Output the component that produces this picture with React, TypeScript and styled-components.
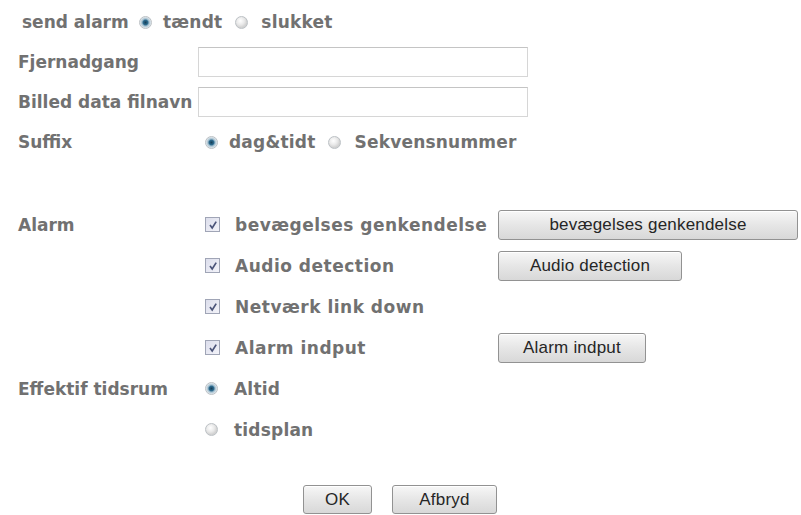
import React from 'react';
import styled, { createGlobalStyle } from 'styled-components';

const GlobalStyle = createGlobalStyle`
  html, body {
    margin: 0;
    padding: 0;
    background: #ffffff;
  }
  body {
    font-family: 'DejaVu Sans', Verdana, sans-serif;
  }
`;

const Form = styled.div`
  width: 801px;
  height: 515px;
  padding: 2px 0 0 18px;
  box-sizing: border-box;
  display: flex;
  flex-direction: column;
  overflow: hidden;
`;

const Row = styled.div<{ $h?: number; $gap?: number }>`
  display: flex;
  align-items: center;
  height: ${(p) => p.$h ?? 41}px;
  margin-top: ${(p) => p.$gap ?? 0}px;
`;

const Label = styled.div<{ $w?: number; $indent?: number }>`
  width: ${(p) => p.$w ?? 180}px;
  padding-left: ${(p) => p.$indent ?? 0}px;
  box-sizing: border-box;
  flex-shrink: 0;
  font-size: 17px;
  letter-spacing: 0;
  font-weight: bold;
  color: #717171;
  white-space: nowrap;
`;

const Options = styled.div<{ $gap?: number }>`
  display: flex;
  align-items: center;
  gap: ${(p) => p.$gap ?? 0}px;
`;

const Option = styled.label<{ $w?: number; $space?: number; $ls?: number }>`
  display: flex;
  align-items: center;
  gap: ${(p) => p.$space ?? 10}px;
  width: ${(p) => (p.$w ? `${p.$w}px` : 'auto')};
  flex-shrink: 0;
  font-size: 17px;
  letter-spacing: ${(p) => p.$ls ?? 0.2}px;
  font-weight: bold;
  color: #717171;
  white-space: nowrap;
`;

const Radio = styled.span<{ $on?: boolean }>`
  width: 13px;
  height: 13px;
  flex-shrink: 0;
  border-radius: 50%;
  box-sizing: border-box;
  border: 1px solid #bcc1c5;
  background: ${(p) =>
    p.$on
      ? 'radial-gradient(circle, #173f58 0, #2c6a8e 2.3px, #a3bfcf 3.6px, #e4eaee 5.5px)'
      : 'radial-gradient(circle at 40% 35%, #ffffff 0, #e9e9e9 4px, #d2d2d2 6.5px)'};
`;

const Check = styled.span`
  width: 15px;
  height: 15px;
  flex-shrink: 0;
  box-sizing: border-box;
  border: 1px solid #a0a5b6;
  background: linear-gradient(135deg, #dcdeec, #f3f3f9);
  display: flex;
  align-items: center;
  justify-content: center;
`;

const TextInput = styled.input`
  width: 330px;
  height: 30px;
  box-sizing: border-box;
  border: 1px solid #d6d6d6;
  border-top-color: #c4c4c4;
  background: #fff;
  margin: 0;
  outline: none;
`;

const Button = styled.button<{ $w: number; $h?: number }>`
  width: ${(p) => p.$w}px;
  height: ${(p) => p.$h ?? 30}px;
  flex-shrink: 0;
  box-sizing: border-box;
  border: 1px solid #929292;
  border-radius: 3px;
  background: linear-gradient(#f7f7f7, #e6e6e6 50%, #d8d8d8);
  font-family: 'Liberation Sans', Arial, sans-serif;
  font-size: 17px;
  letter-spacing: 0.2px;
  color: #262626;
  padding: 0;
  box-shadow: inset 0 1px 0 #ffffff;
`;

const Footer = styled.div`
  display: flex;
  gap: 20px;
  padding-left: 285px;
  margin-top: 35px;
`;

const Tick = () => (
  <svg width="10" height="10" viewBox="0 0 10 10">
    <path d="M2 5 L4.2 8 L8.2 1.6" fill="none" stroke="#4b5479" strokeWidth="1.7" />
  </svg>
);

const CheckOption: React.FC<{ text: string }> = ({ text }) => (
  <Option $w={293} $space={15} $ls={0.5}>
    <Check>
      <Tick />
    </Check>
    {text}
  </Option>
);

const App: React.FC = () => (
  <>
    <GlobalStyle />
    <Form>
      <Row $h={40}>
        <Label $w={121} $indent={4}>send alarm</Label>
        <Options $gap={13}>
          <Option $space={11}>
            <Radio $on />
            tændt
          </Option>
          <Option $space={13}>
            <Radio />
            slukket
          </Option>
        </Options>
      </Row>
      <Row $h={40}>
        <Label>Fjernadgang</Label>
        <TextInput />
      </Row>
      <Row $h={40}>
        <Label>Billed data filnavn</Label>
        <TextInput />
      </Row>
      <Row $h={40}>
        <Label $w={187}>Suffix</Label>
        <Options $gap={13}>
          <Option $space={11}>
            <Radio $on />
            dag&amp;tidt
          </Option>
          <Option $space={13}>
            <Radio />
            Sekvensnummer
          </Option>
        </Options>
      </Row>
      <Row $gap={42}>
        <Label $w={187}>Alarm</Label>
        <CheckOption text="bevægelses genkendelse" />
        <Button $w={300}>bevægelses genkendelse</Button>
      </Row>
      <Row>
        <Label $w={187} />
        <CheckOption text="Audio detection" />
        <Button $w={184}>Audio detection</Button>
      </Row>
      <Row>
        <Label $w={187} />
        <CheckOption text="Netværk link down" />
      </Row>
      <Row>
        <Label $w={187} />
        <CheckOption text="Alarm indput" />
        <Button $w={148}>Alarm indput</Button>
      </Row>
      <Row>
        <Label $w={187}>Effektif tidsrum</Label>
        <Option $space={16}>
          <Radio $on />
          Altid
        </Option>
      </Row>
      <Row>
        <Label $w={187} />
        <Option $space={16}>
          <Radio />
          tidsplan
        </Option>
      </Row>
      <Footer>
        <Button $w={69} $h={29}>OK</Button>
        <Button $w={105} $h={29}>Afbryd</Button>
      </Footer>
    </Form>
  </>
);

export default App;
